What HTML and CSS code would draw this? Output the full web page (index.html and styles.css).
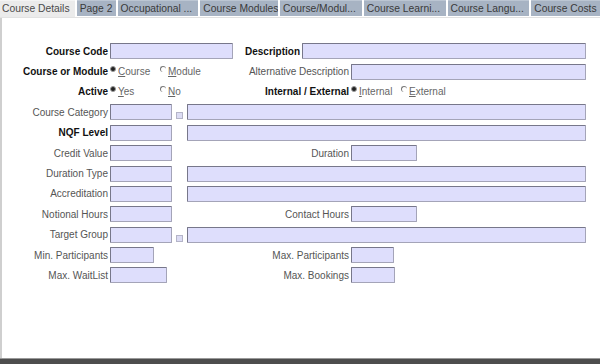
FILE: index.html
```html
<!DOCTYPE html>
<html>
<head>
    <link rel="stylesheet" href="styles.css">
</head>
<body>
    <div class="window">
        <div class="tabs">
            <div class="tab active" style="width: 75px">Course Details</div>
            <div class="tab" style="width: 39px">Page 2</div>
            <div class="tab" style="width: 81px">Occupational ...</div>
            <div class="tab" style="width: 78px">Course Modules</div>
            <div class="tab" style="width: 82px">Course/Modul...</div>
            <div class="tab" style="width: 82px">Course Learni...</div>
            <div class="tab" style="width: 82px">Course Langu...</div>
            <div class="tab" style="width: 69px">Course Costs</div>
        </div>

        <div class="form">
            <div class="row">
                <div class="left">
                    <label class="lbl bold">Course Code</label>
                    <span class="field" style="width: 123px"></span>
                </div>
                <label class="lbl bold short">Description</label>
                <span class="field" style="width: 284px"></span>
            </div>

            <div class="row">
                <div class="left">
                    <label class="lbl bold">Course or Module</label>
                    <span class="radio on"></span><span class="opt"><u>C</u>ourse</span>
                    <span class="radio"></span><span class="opt"><u>M</u>odule</span>
                </div>
                <label class="lbl right-lbl">Alternative Description</label>
                <span class="field" style="width: 235px"></span>
            </div>

            <div class="row">
                <div class="left">
                    <label class="lbl bold">Active</label>
                    <span class="radio on"></span><span class="opt"><u>Y</u>es</span>
                    <span class="radio"></span><span class="opt"><u>N</u>o</span>
                </div>
                <label class="lbl bold right-lbl">Internal / External</label>
                <span class="radio on"></span><span class="opt"><u>I</u>nternal</span>
                <span class="radio"></span><span class="opt"><u>E</u>xternal</span>
            </div>

            <div class="row">
                <label class="lbl">Course Category</label>
                <span class="field" style="width: 62px"></span>
                <span class="lookup"></span>
                <span class="field" style="width: 399px"></span>
            </div>

            <div class="row">
                <label class="lbl bold">NQF Level</label>
                <span class="field" style="width: 62px"></span>
                <span class="gap"></span>
                <span class="field" style="width: 399px"></span>
            </div>

            <div class="row">
                <div class="left">
                    <label class="lbl">Credit Value</label>
                    <span class="field" style="width: 62px"></span>
                </div>
                <label class="lbl right-lbl">Duration</label>
                <span class="field" style="width: 66px"></span>
            </div>

            <div class="row">
                <label class="lbl">Duration Type</label>
                <span class="field" style="width: 62px"></span>
                <span class="gap"></span>
                <span class="field" style="width: 399px"></span>
            </div>

            <div class="row">
                <label class="lbl">Accreditation</label>
                <span class="field" style="width: 62px"></span>
                <span class="gap"></span>
                <span class="field" style="width: 399px"></span>
            </div>

            <div class="row">
                <div class="left">
                    <label class="lbl">Notional Hours</label>
                    <span class="field" style="width: 62px"></span>
                </div>
                <label class="lbl right-lbl">Contact Hours</label>
                <span class="field" style="width: 66px"></span>
            </div>

            <div class="row">
                <label class="lbl">Target Group</label>
                <span class="field" style="width: 62px"></span>
                <span class="lookup"></span>
                <span class="field" style="width: 399px"></span>
            </div>

            <div class="row">
                <div class="left">
                    <label class="lbl">Min. Participants</label>
                    <span class="field" style="width: 44px"></span>
                </div>
                <label class="lbl right-lbl">Max. Participants</label>
                <span class="field" style="width: 43px"></span>
            </div>

            <div class="row">
                <div class="left">
                    <label class="lbl">Max. WaitList</label>
                    <span class="field" style="width: 57px"></span>
                </div>
                <label class="lbl right-lbl">Max. Bookings</label>
                <span class="field" style="width: 44px"></span>
            </div>
        </div>
    </div>
    <div class="statusbar"></div>
</body>
</html>
```

FILE: styles.css
```css
body{
    margin: 0;
    background-color: white;
    font-family: 'Liberation Sans', Arial, sans-serif;
    font-size: 10px;
    color: #555;
}

.window{
    height: 358px;
    border-left: 2px solid #cfcfcf;
    box-sizing: border-box;
    background-color: white;
}

.tabs{
    display: flex;
    height: 17px;
    margin-left: -2px;
    border-bottom: 1px solid #e2e2e2;
    font-size: 10.3px;
}
.tab{
    box-sizing: border-box;
    height: 16px;
    line-height: 15px;
    margin-right: 2px;
    padding-left: 3px;
    background-color: #a7b3c3;
    color: #3a3a3a;
    white-space: nowrap;
    overflow: hidden;
    border-top: 1px solid #bcc6d3;
}
.tab:last-child{
    margin-right: 0;
}
.tab.active{
    height: 17px;
    background-color: #ebebeb;
    color: #4a4a4a;
    border-top: 1px solid #f4f4f4;
    padding-left: 2px;
}

.form{
    padding-top: 23px;
}
.row{
    display: flex;
    align-items: center;
    height: 20.4px;
}
.left{
    display: flex;
    align-items: center;
    width: 243px;
}
.lbl{
    display: inline-block;
    width: 106px;
    text-align: right;
    white-space: nowrap;
    margin-right: 2px;
}
.bold{
    font-weight: bold;
    font-size: 10px;
    color: #111;
}
.lbl.short{
    width: 55px;
}
.lbl.right-lbl{
    width: 104px;
}

.field{
    display: inline-block;
    box-sizing: border-box;
    height: 16px;
    background-color: #dedefc;
    border: 1px solid #a4a4b8;
    border-top-color: #77778a;
    border-left-color: #77778a;
    border-radius: 1px;
}

.lookup{
    display: inline-block;
    box-sizing: border-box;
    width: 7px;
    height: 7px;
    margin: 7px 4px 0 4px;
    background-color: #dcdcf4;
    border: 1px solid #b4b4c8;
}
.gap{
    display: inline-block;
    width: 15px;
}

.radio{
    display: inline-block;
    box-sizing: border-box;
    width: 6px;
    height: 6px;
    margin: 0 2px 5px 0;
    border-radius: 50%;
    border-left: 1px solid #777;
    border-top: 1px solid #777;
}
.radio.on{
    background-color: #222;
    border: 1px solid #999;
}
.opt{
    display: inline-block;
    color: #666;
    width: 42px;
}
.opt u{
    text-decoration: underline;
}

.statusbar{
    height: 6px;
    background-color: #4d4d4d;
    border-top: 1px solid #999;
    box-sizing: border-box;
}
```
